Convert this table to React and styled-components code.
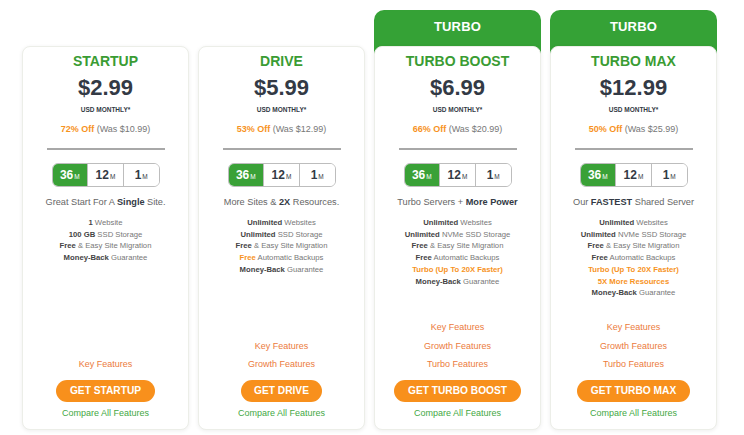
import React from 'react';
import styled, { createGlobalStyle } from 'styled-components';

const GlobalStyle = createGlobalStyle`
  body {
    margin: 0;
    background: #ffffff;
    font-family: "Liberation Sans", Arial, sans-serif;
  }
`;

const Page = styled.div`
  display: grid;
  grid-template-columns: repeat(4, 167px);
  column-gap: 9px;
  align-items: start;
  padding: 10px 0 6px 22px;
`;

const Column = styled.div`
  display: flex;
  flex-direction: column;
  border-radius: 10px 10px 0 0;
  background: ${({ $turbo }) => ($turbo ? 'linear-gradient(#35a236, #35a236) top / 100% 46px no-repeat' : 'transparent')};
`;

const Ribbon = styled.div`
  height: 36px;
  line-height: 34px;
  text-align: center;
  color: #ffffff;
  font-weight: 700;
  font-size: 13px;
  letter-spacing: 0.2px;
`;

const Card = styled.div`
  display: flex;
  flex-direction: column;
  align-items: center;
  height: 384px;
  flex-shrink: 0;
  box-sizing: border-box;
  padding: 6px 0 10px;
  background: #ffffff;
  border: 1px solid #eceee8;
  border-radius: 8px;
  box-shadow: 0 1px 4px rgba(0, 0, 0, 0.07);
`;

const Title = styled.div`
  color: #3a9c33;
  font-weight: 700;
  font-size: 14px;
  line-height: 17px;
`;

const Price = styled.div`
  margin-top: 5px;
  color: #333a45;
  font-weight: 700;
  font-size: 22px;
  line-height: 26px;
`;

const Period = styled.div`
  margin-top: 4px;
  color: #333a45;
  font-weight: 700;
  font-size: 6.5px;
  line-height: 9px;
`;

const Discount = styled.div`
  margin-top: 9px;
  color: #777777;
  font-size: 9px;
  line-height: 12px;

  b {
    color: #f7931e;
  }
`;

const Rule = styled.div`
  margin-top: 13px;
  width: 118px;
  height: 2px;
  background: #a8a8a8;
`;

const Toggle = styled.div`
  margin-top: 13px;
  display: flex;
  width: 108px;
  height: 24px;
  box-sizing: border-box;
  border: 1px solid #bdbdbd;
  border-radius: 6px;
  overflow: hidden;
`;

const Term = styled.div`
  flex: 1;
  display: flex;
  align-items: baseline;
  justify-content: center;
  padding-top: 4px;
  box-sizing: border-box;
  font-weight: 700;
  font-size: 12px;
  color: ${({ $active }) => ($active ? '#ffffff' : '#333a45')};
  background: ${({ $active }) => ($active ? '#3aa137' : '#ffffff')};
  border-left: ${({ $first }) => ($first ? 'none' : '1px solid #bdbdbd')};

  small {
    font-size: 6.5px;
    font-weight: 400;
    margin-left: 1px;
  }
`;

const Tagline = styled.div`
  margin-top: 9px;
  color: #666666;
  font-size: 9.2px;
  line-height: 12px;

  b {
    color: #333a45;
  }
`;

const Features = styled.ul`
  list-style: none;
  margin: 9px 0 0;
  padding: 0;
  text-align: center;
`;

const Feature = styled.li`
  color: #777777;
  font-size: 7.7px;
  line-height: 11.7px;

  b {
    color: #444444;
  }

  em {
    font-style: normal;
    font-weight: 700;
    color: #f7931e;
  }
`;

const Bottom = styled.div`
  margin-top: auto;
  display: flex;
  flex-direction: column;
  align-items: center;
`;

const Links = styled.div`
  display: flex;
  flex-direction: column;
  align-items: center;
  gap: 6.5px;
`;

const FeatureLink = styled.div`
  color: #ec7b3c;
  font-size: 9px;
  line-height: 12px;
`;

const BuyButton = styled.div`
  margin-top: 10px;
  height: 22px;
  line-height: 22px;
  padding: 0 13.5px;
  border-radius: 11px;
  background: #f8901c;
  color: #ffffff;
  font-weight: 700;
  font-size: 10.2px;
  white-space: nowrap;
`;

const Compare = styled.div`
  margin-top: 5px;
  color: #44a844;
  font-size: 9px;
  line-height: 12px;
`;

const plans = [
  {
    name: 'STARTUP',
    price: '$2.99',
    off: '72% Off',
    was: '$10.99',
    tagline: <>Great Start For A <b>Single</b> Site.</>,
    features: [
      <><b>1</b> Website</>,
      <><b>100 GB</b> SSD Storage</>,
      <><b>Free</b> &amp; Easy Site Migration</>,
      <><b>Money-Back</b> Guarantee</>,
    ],
    links: ['Key Features'],
    cta: 'GET STARTUP',
  },
  {
    name: 'DRIVE',
    price: '$5.99',
    off: '53% Off',
    was: '$12.99',
    tagline: <>More Sites &amp; <b>2X</b> Resources.</>,
    features: [
      <><b>Unlimited</b> Websites</>,
      <><b>Unlimited</b> SSD Storage</>,
      <><b>Free</b> &amp; Easy Site Migration</>,
      <><em>Free</em> Automatic Backups</>,
      <><b>Money-Back</b> Guarantee</>,
    ],
    links: ['Key Features', 'Growth Features'],
    cta: 'GET DRIVE',
  },
  {
    name: 'TURBO BOOST',
    turbo: true,
    price: '$6.99',
    off: '66% Off',
    was: '$20.99',
    tagline: <>Turbo Servers + <b>More Power</b></>,
    features: [
      <><b>Unlimited</b> Websites</>,
      <><b>Unlimited</b> NVMe SSD Storage</>,
      <><b>Free</b> &amp; Easy Site Migration</>,
      <><b>Free</b> Automatic Backups</>,
      <em>Turbo (Up To 20X Faster)</em>,
      <><b>Money-Back</b> Guarantee</>,
    ],
    links: ['Key Features', 'Growth Features', 'Turbo Features'],
    cta: 'GET TURBO BOOST',
  },
  {
    name: 'TURBO MAX',
    turbo: true,
    price: '$12.99',
    off: '50% Off',
    was: '$25.99',
    tagline: <>Our <b>FASTEST</b> Shared Server</>,
    features: [
      <><b>Unlimited</b> Websites</>,
      <><b>Unlimited</b> NVMe SSD Storage</>,
      <><b>Free</b> &amp; Easy Site Migration</>,
      <><b>Free</b> Automatic Backups</>,
      <em>Turbo (Up To 20X Faster)</em>,
      <em>5X More Resources</em>,
      <><b>Money-Back</b> Guarantee</>,
    ],
    links: ['Key Features', 'Growth Features', 'Turbo Features'],
    cta: 'GET TURBO MAX',
  },
];

const terms = ['36', '12', '1'];

const PlanCard = ({ plan }) => (
  <Column $turbo={plan.turbo}>
    <Ribbon>{plan.turbo ? 'TURBO' : ''}</Ribbon>
    <Card>
      <Title>{plan.name}</Title>
      <Price>{plan.price}</Price>
      <Period>USD MONTHLY*</Period>
      <Discount><b>{plan.off}</b> (Was {plan.was})</Discount>
      <Rule />
      <Toggle>
        {terms.map((t, i) => (
          <Term key={t} $active={i === 0} $first={i === 0}>
            {t}<small>M</small>
          </Term>
        ))}
      </Toggle>
      <Tagline>{plan.tagline}</Tagline>
      <Features>
        {plan.features.map((f, i) => (
          <Feature key={i}>{f}</Feature>
        ))}
      </Features>
      <Bottom>
        <Links>
          {plan.links.map((l) => (
            <FeatureLink key={l}>{l}</FeatureLink>
          ))}
        </Links>
        <BuyButton>{plan.cta}</BuyButton>
        <Compare>Compare All Features</Compare>
      </Bottom>
    </Card>
  </Column>
);

const App = () => (
  <>
    <GlobalStyle />
    <Page>
      {plans.map((p) => (
        <PlanCard key={p.name} plan={p} />
      ))}
    </Page>
  </>
);

export default App;
